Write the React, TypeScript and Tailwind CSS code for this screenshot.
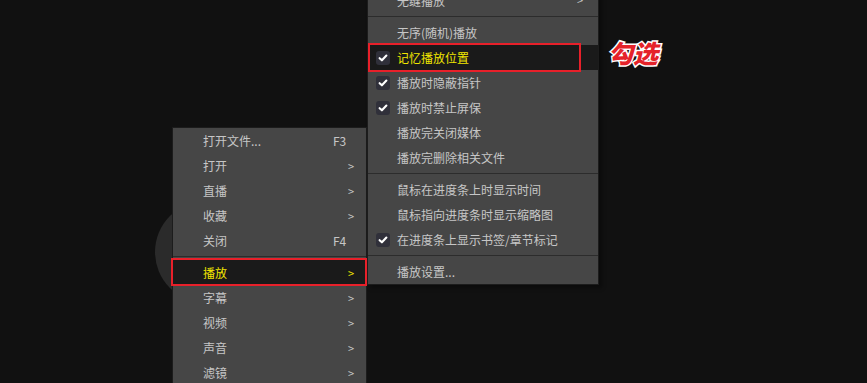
import React from "react";

type Item =
  | { sep: true }
  | { sep?: false; label: string; shortcut?: string; sub?: boolean; checked?: boolean; active?: boolean };

const mainMenu: Item[] = [
  { label: "打开文件...", shortcut: "F3" },
  { label: "打开", sub: true },
  { label: "直播", sub: true },
  { label: "收藏", sub: true },
  { label: "关闭", shortcut: "F4" },
  { sep: true },
  { label: "播放", sub: true, active: true },
  { label: "字幕", sub: true },
  { label: "视频", sub: true },
  { label: "声音", sub: true },
  { label: "滤镜", sub: true },
];

const playMenu: Item[] = [
  { label: "无缝播放", sub: true },
  { sep: true },
  { label: "无序(随机)播放" },
  { label: "记忆播放位置", checked: true, active: true },
  { label: "播放时隐蔽指针", checked: true },
  { label: "播放时禁止屏保", checked: true },
  { label: "播放完关闭媒体" },
  { label: "播放完删除相关文件" },
  { sep: true },
  { label: "鼠标在进度条上时显示时间" },
  { label: "鼠标指向进度条时显示缩略图" },
  { label: "在进度条上显示书签/章节标记", checked: true },
  { sep: true },
  { label: "播放设置..." },
];

function Check() {
  return (
    <span className="flex h-[14px] w-[14px] items-center justify-center rounded-[3px] bg-[#30303a]">
      <svg width="12" height="12" viewBox="0 0 12 12" fill="none">
        <path d="M2.6 6.2 L4.9 8.3 L9.4 3.6" stroke="#ffffff" strokeWidth={2.1} strokeLinecap="round" strokeLinejoin="round" />
      </svg>
    </span>
  );
}

function Separator() {
  return (
    <div className="py-[3px]">
      <div className="h-px bg-[#2c2c2c]" />
    </div>
  );
}

function MainRow({ item }: { item: Extract<Item, { label: string }> }) {
  return (
    <div
      className={`flex h-[25px] items-center pl-[30px] ${item.active ? "bg-[#1a1a1a] text-[#f2e600]" : "text-[#c6c6c6]"}`}
    >
      <span className="flex-1">{item.label}</span>
      <span className="w-[33px]">
        {item.shortcut ? <span>{item.shortcut}</span> : null}
        {item.sub ? <span className="pl-[15px] text-[11px]">&gt;</span> : null}
      </span>
    </div>
  );
}

function PlayRow({ item }: { item: Extract<Item, { label: string }> }) {
  return (
    <div
      className={`flex h-[25px] items-center ${item.active ? "bg-[#1a1a1a] text-[#f2e600]" : "text-[#c6c6c6]"}`}
    >
      <span className="flex w-[29px] justify-center pl-[1px]">{item.checked ? <Check /> : null}</span>
      <span className="flex-1">{item.label}</span>
      {item.sub ? <span className="pr-[15px] text-[11px] text-[#c6c6c6]">&gt;</span> : null}
    </div>
  );
}

export default function App() {
  return (
    <div
      className="relative h-[383px] w-[867px] overflow-hidden bg-[#111111] text-[12px]"
      style={{ fontFamily: '"Noto Sans CJK SC", "Noto Sans", sans-serif' }}
    >
      {/* play button behind the menu */}
      <div className="absolute left-[155px] top-[201px] h-[102px] w-[102px] rounded-full bg-[#2b2b2b]" />

      {/* main context menu */}
      <div className="absolute left-[172px] top-[127px] w-[195px] border border-[#1c1c1c] bg-[#464646]">
        {mainMenu.map((item, i) => (item.sep ? <Separator key={i} /> : <MainRow key={i} item={item} />))}
      </div>

      {/* play submenu */}
      <div className="absolute left-[367px] top-[-12px] w-[232px] border border-t-0 border-[#1c1c1c] bg-[#464646] shadow-[3px_3px_4px_rgba(0,0,0,0.35)]">
        {playMenu.map((item, i) => (item.sep ? <Separator key={i} /> : <PlayRow key={i} item={item} />))}
      </div>

      {/* annotation boxes */}
      <div className="absolute left-[171px] top-[258px] h-[28px] w-[196px] border-2 border-[#e8202a]" />
      <div className="absolute left-[368px] top-[43px] h-[29px] w-[213px] border-2 border-[#e8202a]" />

      <div className="absolute left-[608px] top-[40px] text-[25px] font-black italic leading-none text-[#e5232a] [-webkit-text-stroke:3px_#ffffff] [paint-order:stroke_fill]">
        勾选
      </div>
    </div>
  );
}
